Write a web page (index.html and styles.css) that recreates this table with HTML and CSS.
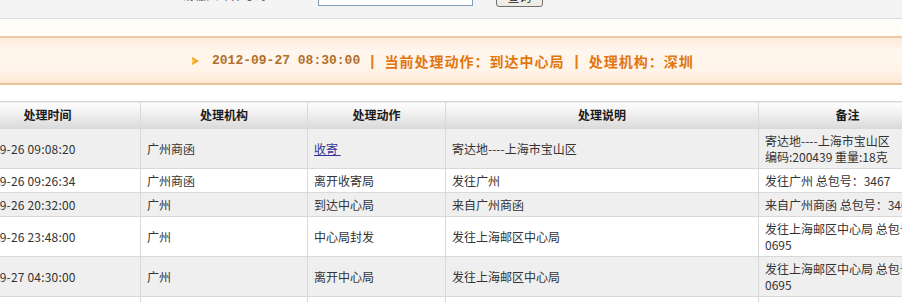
FILE: index.html
```html
<!DOCTYPE html>
<html lang="zh-CN">
<head>
<meta charset="utf-8">
<title>邮件查询</title>
<link rel="stylesheet" href="styles.css">
</head>
<body>
<div class="search">
  <div class="search-row">
    <span class="label"><span class="star">*</span> 请输入邮件号码：</span>
    <input class="code" type="text" value="RR215744084CN">
    <button class="btn" type="button">查询</button>
  </div>
</div>
<div class="spacer-cream"></div>
<div class="banner">
  <svg class="arrow" width="7" height="8" viewBox="0 0 7 8" aria-hidden="true">
    <polygon points="0,0 7,4 0,8" fill="#f3a21c"/>
    <polygon points="0,1.5 3,4 0,6.5" fill="#fbd36a"/>
  </svg>
  <span class="date">2012-09-27 08:30:00</span>
  <span class="sep">|</span>
  <span class="info">当前处理动作：到达中心局</span>
  <span class="sep">|</span>
  <span class="info">处理机构：深圳</span>
</div>
<div class="spacer-white"></div>
<table class="track">
  <colgroup>
    <col class="c1"><col class="c2"><col class="c3"><col class="c4"><col class="c5">
  </colgroup>
  <thead>
    <tr><th>处理时间</th><th>处理机构</th><th>处理动作</th><th>处理说明</th><th>备注</th></tr>
  </thead>
  <tbody>
    <tr class="alt">
      <td class="time">2012-09-26 09:08:20</td><td>广州商函</td><td><a class="act" href="#">收寄&nbsp;</a></td>
      <td>寄达地----上海市宝山区</td><td class="note">寄达地----上海市宝山区<br>编码:200439 重量:18克</td>
    </tr>
    <tr>
      <td class="time">2012-09-26 09:26:34</td><td>广州商函</td><td>离开收寄局</td>
      <td>发往广州</td><td class="note">发往广州 总包号：3467</td>
    </tr>
    <tr class="alt">
      <td class="time">2012-09-26 20:32:00</td><td>广州</td><td>到达中心局</td>
      <td>来自广州商函</td><td class="note">来自广州商函 总包号：3467</td>
    </tr>
    <tr>
      <td class="time">2012-09-26 23:48:00</td><td>广州</td><td>中心局封发</td>
      <td>发往上海邮区中心局</td><td class="note">发往上海邮区中心局 总包号：<br>0695</td>
    </tr>
    <tr class="alt">
      <td class="time">2012-09-27 04:30:00</td><td>广州</td><td>离开中心局</td>
      <td>发往上海邮区中心局</td><td class="note">发往上海邮区中心局 总包号：<br>0695</td>
    </tr>
    <tr>
      <td class="time">2012-09-27 08:30:00</td><td>深圳</td><td>到达中心局</td>
      <td>来自广州</td><td class="note">来自广州 总包号：0695</td>
    </tr>
  </tbody>
</table>
</body>
</html>
```
FILE: styles.css
```css
html, body {
  margin: 0;
  padding: 0;
  overflow: hidden;
  background: #ffffff;
  font-family: "Noto Sans CJK SC", "Liberation Sans", sans-serif;
  font-size: 12px;
  color: #333333;
}

/* top search strip (mostly scrolled off) */
.search {
  height: 18px;
  background: #f4f4f4;
  border-bottom: 1px solid #dcdcdc;
  overflow: hidden;
}
.search-row {
  display: flex;
  align-items: flex-end;
  height: 22px;
  margin-top: -15px;
  padding-left: 174px;
}
.label {
  width: 144px;
  line-height: 16px;
  margin-bottom: 4px;
  color: #444444;
}
.star { color: #555555; }
.code {
  box-sizing: border-box;
  width: 155px;
  height: 20px;
  margin: 0 0 1px 0;
  padding: 0 3px;
  border: 1px solid #7f9db9;
  background: #ffffff;
  font-family: "Liberation Sans", sans-serif;
  font-size: 12px;
  color: #222222;
}
.btn {
  box-sizing: border-box;
  width: 47px;
  height: 22px;
  margin: 0 0 0 23px;
  padding: 0;
  border: 1px solid #707070;
  border-radius: 3px;
  background: linear-gradient(#ffffff, #ece9e2);
  font-family: "Noto Sans CJK SC", sans-serif;
  font-size: 12px;
  color: #222222;
}

.spacer-cream {
  height: 17px;
  background: #fffdf8;
}

/* status banner */
.banner {
  box-sizing: border-box;
  height: 49px;
  border-top: 2px solid #f2c8a2;
  border-bottom: 2px solid #e8c39c;
  background: linear-gradient(#fdebd9 0%, #fff6ee 30%, #fff4e8 70%, #fde9d5 100%);
  display: flex;
  align-items: center;
  padding-left: 192px;
  white-space: nowrap;
}
.arrow {
  display: block;
  margin-right: 13px;
  flex: none;
}
.date {
  font-family: "Liberation Mono", monospace;
  font-weight: bold;
  font-size: 13px;
  color: #b0702a;
}
.sep {
  margin: 0 10px 0 10px;
  font-family: "Liberation Sans", sans-serif;
  font-weight: bold;
  font-size: 15px;
  color: #e27a16;
}
.info {
  font-weight: bold;
  font-size: 14px;
  letter-spacing: 1px;
  color: #e2760e;
}

.spacer-white {
  height: 16px;
  background: #ffffff;
}

/* tracking table */
.track {
  table-layout: fixed;
  border-collapse: collapse;
  width: 982px;
  margin-left: -46px;
}
.c1 { width: 186px; }
.c2 { width: 167px; }
.c3 { width: 138px; }
.c4 { width: 313px; }
.c5 { width: 178px; }

.track th,
.track td {
  border: 1px solid #d9d9d9;
  line-height: 16px;
  white-space: nowrap;
  overflow: visible;
}
.track th {
  padding: 5px 6px;
  background: linear-gradient(#fdfdfd 0%, #f3f3f3 35%, #dadada 100%);
  font-weight: bold;
  color: #1a1a1a;
  text-align: center;
}
.track td {
  padding: 4px 6px 3px 6px;
  text-align: left;
  vertical-align: middle;
  background: #ffffff;
}
.track td.time {
  letter-spacing: 0.2px;
}
.track tr.alt td {
  background: #efefef;
}
.note {
  padding-left: 5px;
}
.act {
  color: #333399;
  text-decoration: underline;
}
```
